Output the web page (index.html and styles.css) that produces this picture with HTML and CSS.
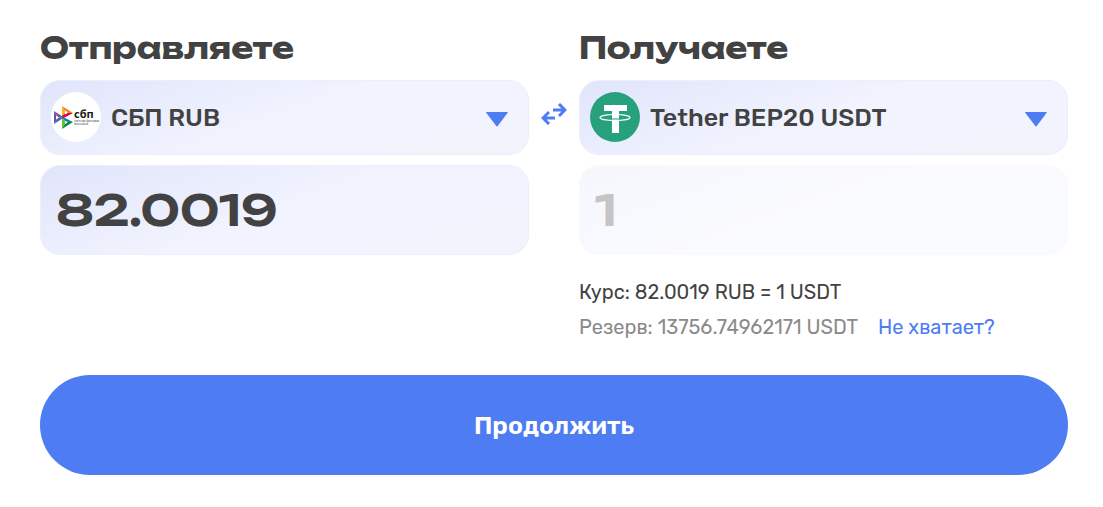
FILE: index.html
```html
<!DOCTYPE html>
<html lang="ru">
<head>
    <meta charset="utf-8">
    <meta name="viewport" content="width=device-width, initial-scale=1.0">
    <title>Обмен СБП RUB на Tether BEP20 USDT</title>
    <link rel="stylesheet" href="styles.css">
</head>
<body>
    <form class="exchange">
        <div class="columns">
            <div class="column">
                <label class="title" for="give-amount">Отправляете</label>
                <div class="currency">
                    <svg class="logo" viewBox="0 0 50 50" aria-hidden="true">
                        <circle cx="25" cy="25" r="25" fill="#fff"/>
                        <path d="M3 19l4 6.500L3 32z" fill="#5b57a2"/>
                        <path d="M3 19l10 6.500H7z" fill="#9a4593"/>
                        <path d="M3 32l10-6.500H7z" fill="#4a62b5"/>
                        <path d="M11 14l4 7-4 4z" fill="#f9b229"/>
                        <path d="M11 14l11 7h-7z" fill="#f08321"/>
                        <path d="M11 27v-3l4-3h7z" fill="#d90751"/>
                        <path d="M8 23l14 7h-7z" fill="#0c84c4"/>
                        <path d="M11 26l4 4-4 7z" fill="#75b82a"/>
                        <path d="M11 37l4-7h7z" fill="#0a8a3d"/>
                        <path d="M14 18.500l3 2-3 2zM5 23.500l3 2-3 2zM14 29l3 1-3 2z" fill="#fff"/>
                        <text class="logo-name" x="23" y="26">сбп</text>
                        <text class="logo-note" x="23" y="30">система быстрых</text>
                        <text class="logo-note" x="23" y="33">платежей</text>
                    </svg>
                    <select class="select" aria-label="Отправляемая валюта">
                        <option>СБП RUB</option>
                    </select>
                    <svg class="arrow" viewBox="0 0 22 16" aria-hidden="true">
                        <path d="M0 1.500Q0 1 1 1h20q1 0 .7.700L11.500 15.300q-.5.500-1 0z"/>
                    </svg>
                </div>
                <input class="amount" id="give-amount" type="text" inputmode="decimal" value="82.0019">
            </div>

            <button class="swap" type="button" aria-label="Поменять местами">
                <svg viewBox="0 0 26 22" aria-hidden="true">
                    <path d="M12 7h12M18 1l6 6-6 6M14 15H2M8 9l-6 6 6 6"/>
                </svg>
            </button>

            <div class="column">
                <label class="title" for="get-amount">Получаете</label>
                <div class="currency">
                    <svg class="logo" viewBox="0 0 50 50" aria-hidden="true">
                        <circle cx="25" cy="25" r="25" fill="#26a17b"/>
                        <path d="M14 13h23v6h-8v22h-7V19h-8z" fill="#fff"/>
                        <ellipse cx="25" cy="25.500" rx="15" ry="3" fill="none" stroke="#fff" stroke-width="1.200"/>
                        <path d="M22 27h7" fill="none" stroke="#26a17b"/>
                    </svg>
                    <select class="select" aria-label="Получаемая валюта">
                        <option>Tether BEP20 USDT</option>
                    </select>
                    <svg class="arrow" viewBox="0 0 22 16" aria-hidden="true">
                        <path d="M0 1.500Q0 1 1 1h20q1 0 .7.700L11.500 15.300q-.5.500-1 0z"/>
                    </svg>
                </div>
                <input class="amount" id="get-amount" type="text" value="1" disabled>
                <div class="info">
                    <div class="rate">Курс: 82.0019 RUB = 1 USDT</div>
                    <div class="reserve">
                        <span>Резерв: 13756.74962171 USDT</span>
                        <a class="link" href="#">Не хватает?</a>
                    </div>
                </div>
            </div>
        </div>
        <button class="submit" type="submit">Продолжить</button>
    </form>
</body>
</html>
```
FILE: styles.css
```css
* {
    box-sizing: border-box;
}
body {
    margin: 0;
    background-color: #fff;
    color: #424242;
    font-family: Rubik, Roboto, sans-serif;
    font-size: 20px;
}
.exchange {
    padding: 28px 35px 32px 40px;
}
.columns {
    display: grid;
    grid-template-columns: 1fr 50px 1fr;
    margin-bottom: 30px;
}
.column {
    display: flex;
    flex-direction: column;
    gap: 10px;
    min-width: 0;
}
.title {
    padding-bottom: 2px;
    font-family: Unbounded, "DejaVu Sans", sans-serif;
    font-size: 30px;
    font-weight: 700;
    line-height: 40px;
}
.currency {
    position: relative;
}
.logo {
    position: absolute;
    top: 12px;
    left: 11px;
    width: 50px;
    height: 50px;
    pointer-events: none;
}
.logo-name {
    font: 700 11px "Open Sans", sans-serif;
    fill: #1a1a1a;
}
.logo-note {
    font: 3px "Open Sans", sans-serif;
    fill: #1a1a1a;
}
.select,
.amount {
    display: block;
    width: 100%;
    border: 1px solid #eceffb;
    border-radius: 20px;
    background: linear-gradient(160deg, #e1e5fb 0%, #f1f3fe 50%, #f1f4fd 100%);
    color: #424242;
    outline: none;
}
.select {
    height: 75px;
    padding: 0 60px 0 70px;
    appearance: none;
    font-family: inherit;
    font-size: 25px;
    font-weight: 500;
    cursor: pointer;
}
.arrow {
    position: absolute;
    top: 31px;
    right: 21px;
    width: 22px;
    height: 16px;
    fill: #4d7cf3;
    pointer-events: none;
}
.amount {
    height: 90px;
    padding: 0 15px;
    font-family: Unbounded, "DejaVu Sans", sans-serif;
    font-size: 43px;
    font-weight: 600;
}
.amount:disabled {
    opacity: 0.3;
}
.swap {
    align-self: start;
    justify-self: center;
    margin-top: 75px;
    padding: 0;
    border: none;
    background: none;
    cursor: pointer;
}
.swap svg {
    display: block;
    width: 26px;
    height: 22px;
    fill: none;
    stroke: #4d7cf3;
    stroke-width: 3;
}
.info {
    margin-top: 10px;
    line-height: 35px;
}
.reserve {
    display: flex;
    flex-wrap: wrap;
    column-gap: 20px;
    color: #8a8a8a;
}
.link {
    color: #4d7cf3;
    text-decoration: none;
}
.submit {
    display: block;
    width: 100%;
    height: 100px;
    border: none;
    border-radius: 50px;
    background-color: #4d7cf3;
    color: #fff;
    font-family: inherit;
    font-size: 25px;
    font-weight: 600;
    cursor: pointer;
}
@media only screen and (max-width: 700px) {
    .exchange {
        padding: 20px;
    }
    .columns {
        grid-template-columns: 1fr;
        gap: 20px;
    }
    .swap {
        margin-top: 0;
    }
}
```
